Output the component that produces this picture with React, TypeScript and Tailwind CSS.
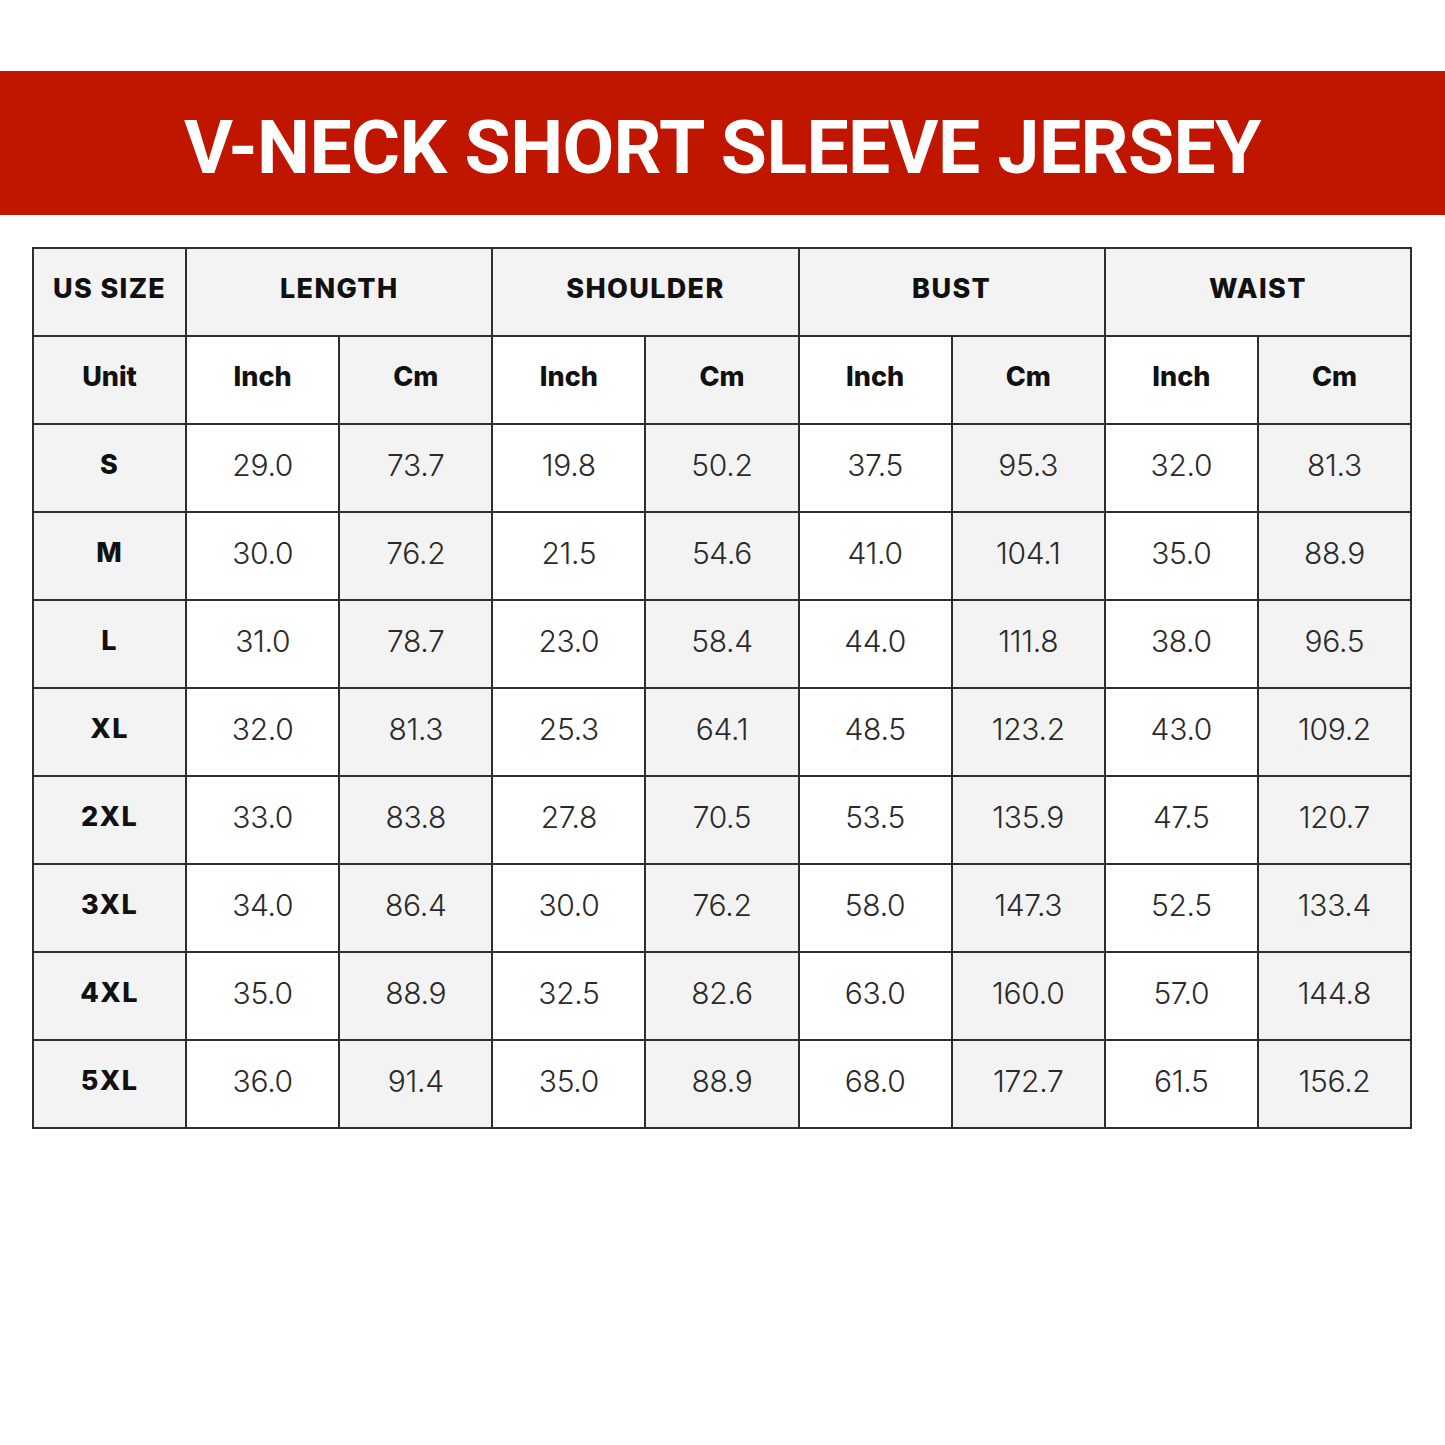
import React from "react";

// size chart data: [size, length in/cm, shoulder in/cm, bust in/cm, waist in/cm]
const rows: string[][] = [
  ["S", "29.0", "73.7", "19.8", "50.2", "37.5", "95.3", "32.0", "81.3"],
  ["M", "30.0", "76.2", "21.5", "54.6", "41.0", "104.1", "35.0", "88.9"],
  ["L", "31.0", "78.7", "23.0", "58.4", "44.0", "111.8", "38.0", "96.5"],
  ["XL", "32.0", "81.3", "25.3", "64.1", "48.5", "123.2", "43.0", "109.2"],
  ["2XL", "33.0", "83.8", "27.8", "70.5", "53.5", "135.9", "47.5", "120.7"],
  ["3XL", "34.0", "86.4", "30.0", "76.2", "58.0", "147.3", "52.5", "133.4"],
  ["4XL", "35.0", "88.9", "32.5", "82.6", "63.0", "160.0", "57.0", "144.8"],
  ["5XL", "36.0", "91.4", "35.0", "88.9", "68.0", "172.7", "61.5", "156.2"],
];

const groups = ["LENGTH", "SHOULDER", "BUST", "WAIST"];

const cell = "border-2 border-[#2e2e2e] h-[88px] pb-[5px] text-center align-middle";
const head = "font-['Inter',sans-serif] font-extrabold text-[27px] tracking-[0.05em] text-[#111]";
const num = "font-['Inter',sans-serif] font-light text-[30px] text-[#2a2a2a] tracking-[-0.01em]";

export default function App() {
  return (
    <div className="w-[1445px] h-[1445px] bg-white pt-[71px]">
      <div className="h-[144px] bg-[#c01600] flex items-center justify-center pt-[8px]">
        <h1 className="font-['Roboto',sans-serif] font-bold text-white text-[75px] leading-none tracking-[-0.008em]">
          V-NECK SHORT SLEEVE JERSEY
        </h1>
      </div>

      <div className="pt-[32px] pl-[32px]">
        <table className="border-collapse w-[1380px] table-fixed">
          <tbody>
            <tr>
              <td className={`${cell} bg-[#f3f3f3] ${head} text-[25px]`}>US SIZE</td>
              {groups.map((g) => (
                <td key={g} colSpan={2} className={`${cell} bg-[#f3f3f3] ${head}`}>
                  {g}
                </td>
              ))}
            </tr>
            <tr>
              <td className={`${cell} bg-[#f3f3f3] ${head} tracking-normal`}>Unit</td>
              {groups.map((g) => (
                <React.Fragment key={g}>
                  <td className={`${cell} bg-white ${head} tracking-normal`}>Inch</td>
                  <td className={`${cell} bg-[#f3f3f3] ${head} tracking-normal`}>Cm</td>
                </React.Fragment>
              ))}
            </tr>
            {rows.map((r) => (
              <tr key={r[0]}>
                <td className={`${cell} bg-[#f3f3f3] ${head}`}>{r[0]}</td>
                {r.slice(1).map((v, i) => (
                  <td
                    key={i}
                    className={`${cell} ${num} ${i % 2 === 0 ? "bg-white" : "bg-[#f3f3f3]"}`}
                  >
                    {v}
                  </td>
                ))}
              </tr>
            ))}
          </tbody>
        </table>
      </div>
    </div>
  );
}
